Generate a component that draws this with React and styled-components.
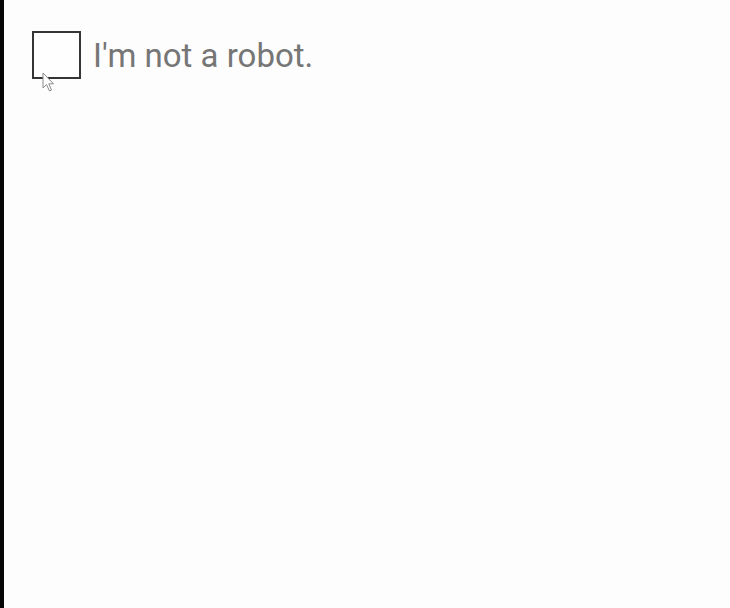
import React from 'react';
import styled, { createGlobalStyle } from 'styled-components';

const GlobalStyle = createGlobalStyle`
  html, body {
    margin: 0;
    padding: 0;
    background: #fdfdfd;
  }
`;

const Page = styled.div`
  display: flex;
  width: 730px;
  height: 608px;
  background: #fdfdfd;
  overflow: hidden;
`;

const Edge = styled.div`
  width: 4px;
  flex-shrink: 0;
  background: #060606;
`;

const Content = styled.div`
  flex: 1;
  padding: 31px 0 0 28px;
`;

const Row = styled.label`
  display: flex;
  align-items: center;
  gap: 12px;
  font-family: Roboto, "Liberation Sans", sans-serif;
`;

const Box = styled.span`
  position: relative;
  width: 49px;
  height: 48px;
  box-sizing: border-box;
  border: 2px solid #353535;
  background: #fefefe;
  flex-shrink: 0;
`;

const Pointer = styled.svg`
  position: absolute;
  left: 8px;
  top: 39px;
`;

const Label = styled.span`
  font-size: 33px;
  color: #767676;
  line-height: 1;
  margin-top: 1px;
`;

export default function App() {
  return (
    <Page>
      <GlobalStyle />
      <Edge />
      <Content>
        <Row>
          <Box>
            <Pointer width="14" height="21" viewBox="0 0 14 21">
              <path
                d="M1 1 L1 16 L4.5 12.5 L7.5 19 L9.5 18 L6.8 11.8 L11.5 11.8 Z"
                fill="#ffffff"
                stroke="#8a8a8a"
                strokeWidth="1"
                strokeLinejoin="round"
              />
            </Pointer>
          </Box>
          <Label>I'm not a robot.</Label>
        </Row>
      </Content>
    </Page>
  );
}
